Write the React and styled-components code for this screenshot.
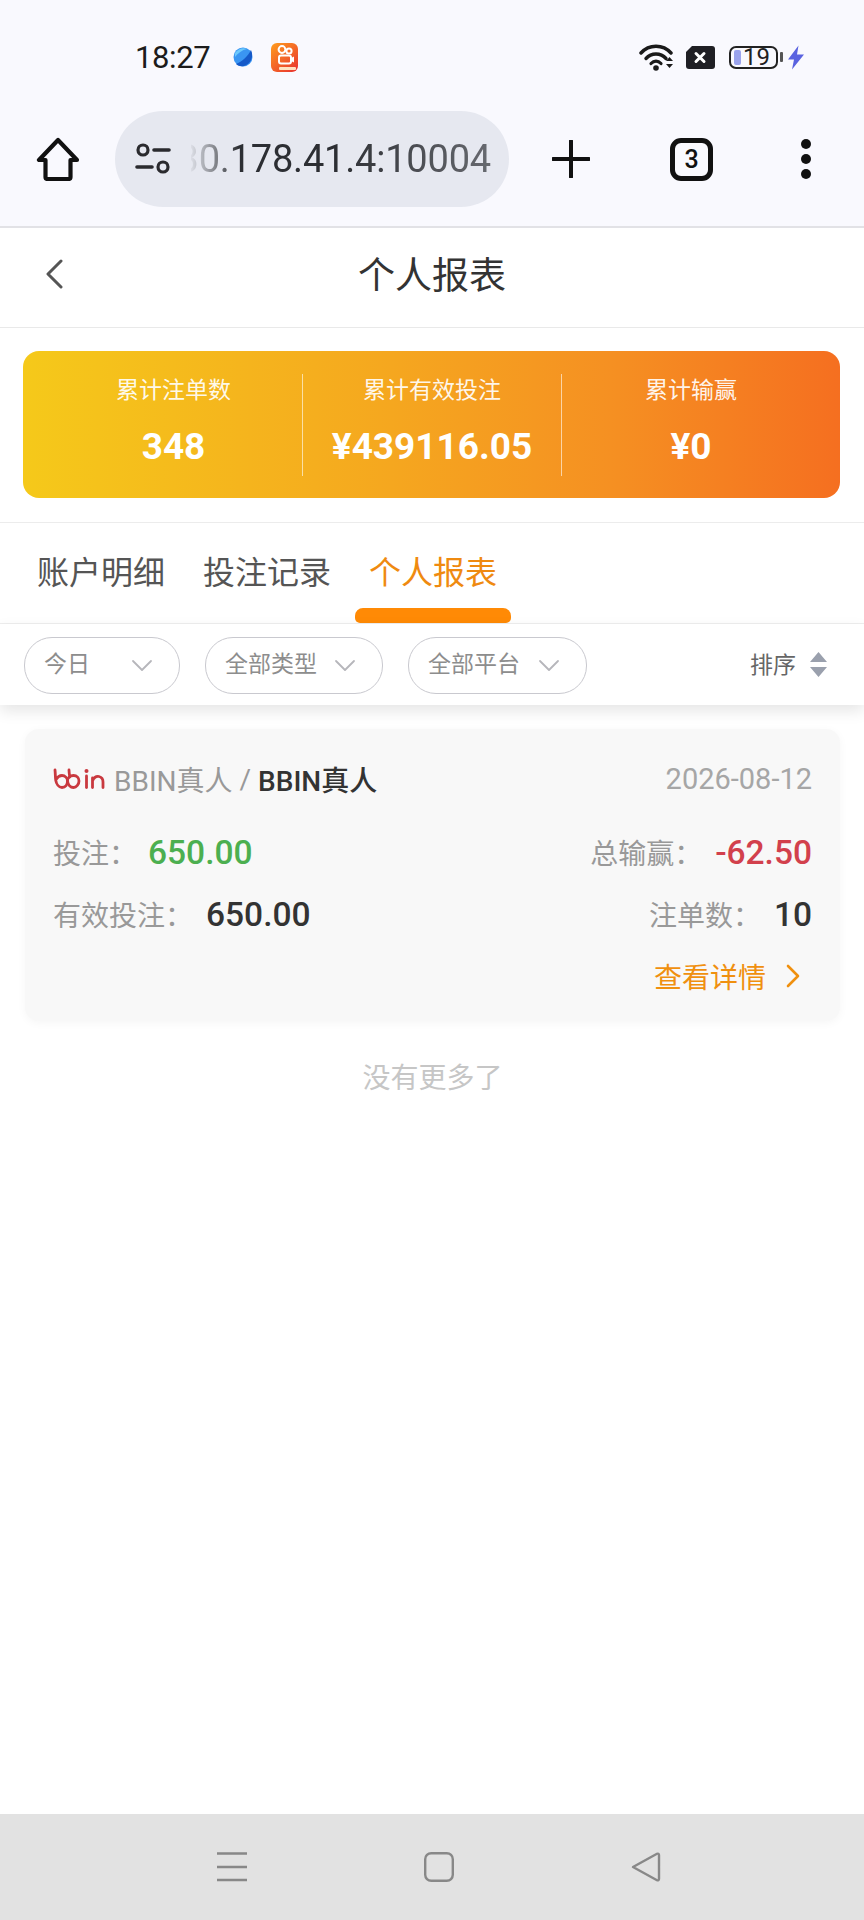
import React from 'react';
import styled, { createGlobalStyle } from 'styled-components';

const GlobalStyle = createGlobalStyle`
    html, body {
        margin: 0;
        padding: 0;
        background: #fff;
    }
    body {
        font-family: Roboto, "Noto Sans CJK SC", sans-serif;
        color: #333;
    }
`;

const Page = styled.div`
    width: 864px;
    min-height: 1920px;
    display: flex;
    flex-direction: column;
    overflow: hidden;
`;

const Chrome = styled.div`
    background: #f9f9fe;
    height: 226px;
    border-bottom: 2px solid #e2e2e6;
`;

const StatusBar = styled.div`
    height: 86px;
    margin-top: 14px;
    padding: 0 60px 0 135px;
    display: flex;
    align-items: center;
`;

const Clock = styled.span`
    font-size: 31px;
    color: #1c1c1c;
    letter-spacing: -0.4px;
    width: 98px;
`;

const StatusRight = styled.div`
    margin-left: auto;
    display: flex;
    align-items: center;
`;

const BatteryBody = styled.div`
    width: 49px;
    height: 23px;
    margin-left: 14px;
    box-sizing: border-box;
    border: 2px solid #222;
    border-radius: 7px;
    padding-left: 3px;
    display: flex;
    align-items: center;
    gap: 2px;
    font-size: 24px;
    line-height: 19px;
    color: #222;

    i {
        width: 7px;
        height: 15px;
        border-radius: 2px;
        background: #9aa3ec;
    }
`;

const BatteryNub = styled.div`
    width: 3px;
    height: 10px;
    margin-left: 2px;
    border-radius: 1px;
    background: #555;
`;

const Toolbar = styled.div`
    height: 118px;
    padding-left: 36px;
    display: flex;
    align-items: center;
`;

const UrlPill = styled.div`
    width: 394px;
    height: 96px;
    margin: 0 43px 0 35px;
    padding: 0 18px 0 20px;
    box-sizing: border-box;
    border-radius: 48px;
    background: #e6e8f0;
    display: flex;
    align-items: center;
`;

const UrlText = styled.div`
    flex: 1;
    overflow: hidden;
    display: flex;
    justify-content: flex-end;
    margin-left: 20px;
    font-size: 38px;
    color: #2c2e33;
    white-space: nowrap;
    letter-spacing: -0.2px;
    -webkit-mask-image: linear-gradient(to right, rgba(0, 0, 0, 0.05), #000 16%, #000 48%, rgba(0, 0, 0, 0.68) 100%);
    mask-image: linear-gradient(to right, rgba(0, 0, 0, 0.05), #000 16%, #000 48%, rgba(0, 0, 0, 0.68) 100%);
`;

const TabCount = styled.div`
    width: 43px;
    height: 43px;
    margin-left: 80px;
    box-sizing: border-box;
    border: 5px solid #111;
    border-radius: 11px;
    display: flex;
    align-items: center;
    justify-content: center;
    font-size: 25px;
    font-weight: 500;
    color: #111;
`;

const MenuDots = styled.div`
    width: 11px;
    margin-left: 88px;
    display: flex;
    flex-direction: column;
    gap: 5px;

    i {
        width: 10px;
        height: 10px;
        border-radius: 50%;
        background: #111;
    }
`;

const Header = styled.header`
    height: 99px;
    display: grid;
    grid-template-columns: 1fr auto 1fr;
    align-items: center;
    border-bottom: 1px solid #e9e9e9;
    padding: 0 45px;
`;

const Title = styled.h1`
    margin: 0 0 9px;
    font-size: 37px;
    font-weight: 400;
    color: #333;
`;

const BackWrap = styled.div`
    display: flex;
    margin-bottom: 7px;
`;

const SummaryWrap = styled.section`
    padding: 23px 24px 24px 23px;
    border-bottom: 1px solid #ececec;
`;

const SummaryCard = styled.div`
    height: 147px;
    padding: 0 20px;
    border-radius: 16px;
    background: linear-gradient(90deg, #f5c91a 0%, #f5a71f 45%, #f59022 72%, #f56f20 100%);
    display: grid;
    grid-template-columns: repeat(3, 1fr);
    align-items: center;
    box-sizing: border-box;
`;

const SummaryItem = styled.div`
    height: 102px;
    padding-left: ${(props) => (props.divided ? '0' : '2px')};
    display: flex;
    flex-direction: column;
    align-items: center;
    justify-content: space-between;
    border-left: ${(props) => (props.divided ? '1px solid rgba(255, 255, 255, 0.6)' : '0')};
    color: #fff;

    span {
        font-size: 23px;
        line-height: 32px;
        margin-top: 1px;
        color: rgba(255, 255, 255, 0.92);
    }

    strong {
        font-size: 37px;
        line-height: 42px;
        font-weight: 700;
        margin-bottom: 8px;
    }
`;

const Tabs = styled.nav`
    height: 100px;
    padding-left: 18px;
    display: flex;
    border-bottom: 1px solid #eeeeee;
`;

const Tab = styled.div`
    width: 166px;
    display: flex;
    flex-direction: column;
    align-items: center;
    justify-content: flex-end;
    font-size: 32px;
    color: ${(props) => (props.active ? '#ef8a10' : '#555')};

    span {
        line-height: 44px;
        margin-bottom: ${(props) => (props.active ? '13px' : '28px')};
    }

    i {
        display: ${(props) => (props.active ? 'block' : 'none')};
        width: 156px;
        height: 15px;
        border-radius: 8px 8px 5px 5px;
        background: #ff8a05;
    }
`;

const FilterBar = styled.div`
    height: 81px;
    padding: 1px 37px 0 24px;
    box-sizing: border-box;
    display: flex;
    align-items: center;
    gap: 25px;
    background: #fff;
    box-shadow: 0 6px 14px rgba(0, 0, 0, 0.1);
    position: relative;
`;

const Pill = styled.div`
    width: ${(props) => props.width}px;
    height: 57px;
    padding: 0 26px 0 19px;
    box-sizing: border-box;
    border: 1.5px solid #c9c9cf;
    border-radius: 28px;
    display: flex;
    align-items: center;
    justify-content: space-between;
    font-size: 23px;
    color: #8d8d8d;

    span {
        margin-bottom: 6px;
    }
`;

const Sort = styled.div`
    margin-left: auto;
    display: flex;
    align-items: center;
    gap: 14px;
    font-size: 23px;
    color: #666;

    span {
        margin-bottom: 5px;
    }
`;

const Content = styled.main`
    flex: 1;
    padding: 24px 24px 0 25px;
`;

const ReportCard = styled.article`
    height: 292px;
    padding: 18px 28px 0 28px;
    box-sizing: border-box;
    border-radius: 14px;
    background: #f8f8f8;
    box-shadow: 0 2px 10px rgba(0, 0, 0, 0.04);
    display: flex;
    flex-direction: column;
`;

const Row = styled.div`
    height: 62px;
    display: flex;
    align-items: center;
    justify-content: space-between;
`;

const HeadRow = styled(Row)`
    height: 64px;
    margin-bottom: 10px;
`;

const Platform = styled.div`
    display: flex;
    align-items: center;
    font-size: 28px;
    color: #999;

    svg {
        margin-right: 9px;
    }

    b {
        font-weight: 500;
        color: #333;
    }

    em {
        font-style: normal;
        margin: 0 7px;
    }
`;

const DateText = styled.span`
    font-size: 29px;
    color: #a6a6a6;
`;

const Stat = styled.div`
    display: flex;
    align-items: center;
    font-size: 28px;
    color: #999;

    label {
        margin-right: ${(props) => props.gap || 13}px;
    }

    span {
        font-size: 33.5px;
        font-weight: 500;
        color: ${(props) => props.color || '#333'};
    }
`;

const DetailLink = styled.div`
    margin-left: auto;
    display: flex;
    align-items: center;
    gap: 20px;
    padding-right: 12px;
    font-size: 28px;
    color: #f0900f;
`;

const NoMore = styled.p`
    margin: 38px 0 0;
    line-height: 40px;
    text-align: center;
    font-size: 28px;
    color: #c6c6c6;
`;

const NavBar = styled.footer`
    height: 106px;
    background: #e2e2e2;
    padding: 38px 0 0 217px;
    box-sizing: border-box;
    display: flex;
    align-items: flex-start;
    gap: 177px;
`;

const Chevron = ({ color = '#b6b6bb' }) => (
    <svg width='22' height='13' viewBox='0 0 22 13' fill='none'>
        <path d='M2 2l9 9 9-9' stroke={color} strokeWidth='1.800' strokeLinecap='round' strokeLinejoin='round' />
    </svg>
);

const Wifi = () => (
    <svg width='36' height='28' viewBox='0 0 36 28' fill='none'>
        <path d='M2 10c8-9 22-9 30 0' stroke='#1a1a1a' strokeWidth='3.400' strokeLinecap='round' />
        <path d='M7 15.500c5.500-6 14.500-6 20 0' stroke='#1a1a1a' strokeWidth='3.400' strokeLinecap='round' />
        <path d='M12 20.500c3-3.200 7-3.200 10 0' stroke='#1a1a1a' strokeWidth='3.200' strokeLinecap='round' />
        <circle cx='17' cy='25' r='2.800' fill='#1a1a1a' />
        <path d='M27 18l3.500-4 3.500 4zM27 21h7l-3.500 4z' fill='#1a1a1a' />
    </svg>
);

const Sim = () => (
    <svg width='29' height='23' viewBox='0 0 29 23' style={{ marginLeft: 11 }}>
        <path d='M6 0h20a3 3 0 013 3v17a3 3 0 01-3 3H3a3 3 0 01-3-3V6z' fill='#1f1f24' />
        <path d='M10 7.500l8 8M18 7.500l-8 8' stroke='#fff' strokeWidth='3' strokeLinecap='round' />
    </svg>
);

const Bolt = () => (
    <svg width='16' height='25' viewBox='0 0 16 24' style={{ marginLeft: 5 }}>
        <path d='M10.500 0L0 14h6l-2 10L16 9H9z' fill='#5a63e0' />
    </svg>
);

const AppIcons = () => (
    <>
        <svg width='20' height='20' viewBox='0 0 20 20'>
            <circle cx='10' cy='10' r='9.500' fill='#3a95f2' />
            <path d='M3 17C9 15 15 9 18 3c3 6 0 14-7 16-3 .6-6 0-8-2z' fill='#1559c8' />
            <path d='M2 6c3-4 8-6 12-4-5 1-9 4-12 8z' fill='#6cc8fb' />
        </svg>
        <svg width='27' height='29' viewBox='0 0 27 29' style={{ marginLeft: 18 }}>
            <defs>
                <linearGradient id='appIcon' x1='0' y1='0' x2='0.8' y2='1'>
                    <stop offset='0' stopColor='#ff9d1e' />
                    <stop offset='1' stopColor='#ea3a2e' />
                </linearGradient>
            </defs>
            <rect width='27' height='29' rx='6' fill='url(#appIcon)' />
            <circle cx='11' cy='6.500' r='3.400' fill='none' stroke='#fff' strokeWidth='2' />
            <circle cx='18' cy='8' r='2.600' fill='none' stroke='#fff' strokeWidth='2' />
            <rect x='8' y='12.500' width='12' height='8' rx='2' fill='none' stroke='#fff' strokeWidth='2' />
            <path d='M20 15l3-1.500v6L20 18z' fill='#fff' />
            <rect x='8' y='24' width='17' height='3' rx='1' fill='#ffe2c0' />
        </svg>
    </>
);

const HomeIcon = () => (
    <svg width='44' height='44' viewBox='0 0 44 44' fill='none' style={{ flexShrink: 0 }}>
        <path
            d='M22 3L3 23h6.500v17a2 2 0 002 2h21a2 2 0 002-2V23H41z'
            stroke='#111'
            strokeWidth='4.200'
            strokeLinejoin='round'
        />
    </svg>
);

const TuneIcon = () => (
    <svg width='36' height='32' viewBox='0 0 36 32' fill='none' style={{ flexShrink: 0 }}>
        <circle cx='8' cy='7' r='5' stroke='#2a2a2e' strokeWidth='3.200' />
        <path d='M19 7h15M2 24h15' stroke='#2a2a2e' strokeWidth='3.600' strokeLinecap='round' />
        <circle cx='28' cy='24' r='5' stroke='#2a2a2e' strokeWidth='3.200' />
    </svg>
);

const PlusIcon = () => (
    <svg width='38' height='38' viewBox='0 0 38 38' style={{ flexShrink: 0 }}>
        <path d='M19 1v36M1 19h36' stroke='#111' strokeWidth='4' strokeLinecap='round' />
    </svg>
);

const BackIcon = () => (
    <svg width='18' height='30' viewBox='0 0 18 30' fill='none'>
        <path d='M16 2L3 15l13 13' stroke='#555' strokeWidth='3' strokeLinecap='round' strokeLinejoin='round' />
    </svg>
);

const SortIcon = () => (
    <svg width='17' height='26' viewBox='0 0 17 26'>
        <path d='M8.500 0L17 10H0zM0 15h17l-8.500 10z' fill='#9aa0ad' />
    </svg>
);

const BbinLogo = () => (
    <svg width='52' height='22' viewBox='0 0 52 22' fill='none'>
        <g stroke='#c9393f' strokeWidth='2.800' strokeLinecap='round'>
            <path d='M2 2c.5 4 .2 7 .7 10 .6 4 3 7.500 6.300 7.500 3.500 0 5.500-3 5.500-6.500 0-3-2.500-5.500-5.500-5.500-2.500 0-4.500 1.500-6 4' />
            <path d='M14.500 13c0-3 2.500-5.500 6-5.500s5.500 2.500 5.500 5.500-2.500 6.500-5.500 6.500c-3 0-5.500-2.500-6-6.500' />
            <path d='M16 2c0 2 .3 4 .8 7' />
            <path d='M33.500 8v11.500' />
            <path d='M39.500 19.500V10M39.500 13c1.500-3.500 4-5 6.500-4.500 2.500.6 4 2.500 4 5.500v5.500' />
        </g>
        <circle cx='33.500' cy='3' r='2' fill='#c9393f' />
    </svg>
);

const RightIcon = () => (
    <svg width='14' height='24' viewBox='0 0 14 24' fill='none'>
        <path d='M2 2l10 10L2 22' stroke='#f0900f' strokeWidth='2.600' strokeLinecap='round' strokeLinejoin='round' />
    </svg>
);

const MenuIcon = () => (
    <svg width='30' height='30' viewBox='0 0 30 30'>
        <path d='M0 1.500h30M0 15h30M0 28h30' stroke='#888' strokeWidth='2.400' />
    </svg>
);

const SquareIcon = () => (
    <svg width='30' height='30' viewBox='0 0 30 30' fill='none'>
        <rect x='1.200' y='1.200' width='27.600' height='27.600' rx='6' stroke='#888' strokeWidth='2.400' />
    </svg>
);

const TriangleIcon = () => (
    <svg width='30' height='30' viewBox='0 0 30 30' fill='none'>
        <path
            d='M2 15L26 1.800c1-.5 2 0 2 1.200v24c0 1.200-1 1.700-2 1.200z'
            stroke='#888'
            strokeWidth='2.400'
            strokeLinejoin='round'
        />
    </svg>
);

const summary = [
    { label: '累计注单数', value: '348' },
    { label: '累计有效投注', value: '¥439116.05' },
    { label: '累计输赢', value: '¥0' },
];

const tabs = ['账户明细', '投注记录', '个人报表'];

const filters = [
    { label: '今日', width: 156 },
    { label: '全部类型', width: 178 },
    { label: '全部平台', width: 179 },
];

const App = () => {
    return (
        <Page>
            <GlobalStyle />
            <Chrome>
                <StatusBar>
                    <Clock>18:27</Clock>
                    <AppIcons />
                    <StatusRight>
                        <Wifi />
                        <Sim />
                        <BatteryBody>
                            <i />
                            19
                        </BatteryBody>
                        <BatteryNub />
                        <Bolt />
                    </StatusRight>
                </StatusBar>
                <Toolbar>
                    <HomeIcon />
                    <UrlPill>
                        <TuneIcon />
                        <UrlText>30.178.41.4:10004</UrlText>
                    </UrlPill>
                    <PlusIcon />
                    <TabCount>3</TabCount>
                    <MenuDots>
                        <i />
                        <i />
                        <i />
                    </MenuDots>
                </Toolbar>
            </Chrome>

            <Header>
                <BackWrap>
                    <BackIcon />
                </BackWrap>
                <Title>个人报表</Title>
            </Header>

            <SummaryWrap>
                <SummaryCard>
                    {summary.map((item, index) => (
                        <SummaryItem key={item.label} divided={index > 0}>
                            <span>{item.label}</span>
                            <strong>{item.value}</strong>
                        </SummaryItem>
                    ))}
                </SummaryCard>
            </SummaryWrap>

            <Tabs>
                {tabs.map((tab, index) => (
                    <Tab key={tab} active={index === 2}>
                        <span>{tab}</span>
                        <i />
                    </Tab>
                ))}
            </Tabs>

            <FilterBar>
                {filters.map((filter) => (
                    <Pill key={filter.label} width={filter.width}>
                        <span>{filter.label}</span>
                        <Chevron />
                    </Pill>
                ))}
                <Sort>
                    <span>排序</span>
                    <SortIcon />
                </Sort>
            </FilterBar>

            <Content>
                <ReportCard>
                    <HeadRow>
                        <Platform>
                            <BbinLogo />
                            BBIN真人<em>/</em>
                            <b>BBIN真人</b>
                        </Platform>
                        <DateText>2026-08-12</DateText>
                    </HeadRow>
                    <Row>
                        <Stat color='#4caf50' gap={11}>
                            <label>投注：</label>
                            <span>650.00</span>
                        </Stat>
                        <Stat color='#d2404c'>
                            <label>总输赢：</label>
                            <span>-62.50</span>
                        </Stat>
                    </Row>
                    <Row>
                        <Stat>
                            <label>有效投注：</label>
                            <span>650.00</span>
                        </Stat>
                        <Stat>
                            <label>注单数：</label>
                            <span>10</span>
                        </Stat>
                    </Row>
                    <Row>
                        <DetailLink>
                            查看详情
                            <RightIcon />
                        </DetailLink>
                    </Row>
                </ReportCard>
                <NoMore>没有更多了</NoMore>
            </Content>

            <NavBar>
                <MenuIcon />
                <SquareIcon />
                <TriangleIcon />
            </NavBar>
        </Page>
    );
};

export default App;
